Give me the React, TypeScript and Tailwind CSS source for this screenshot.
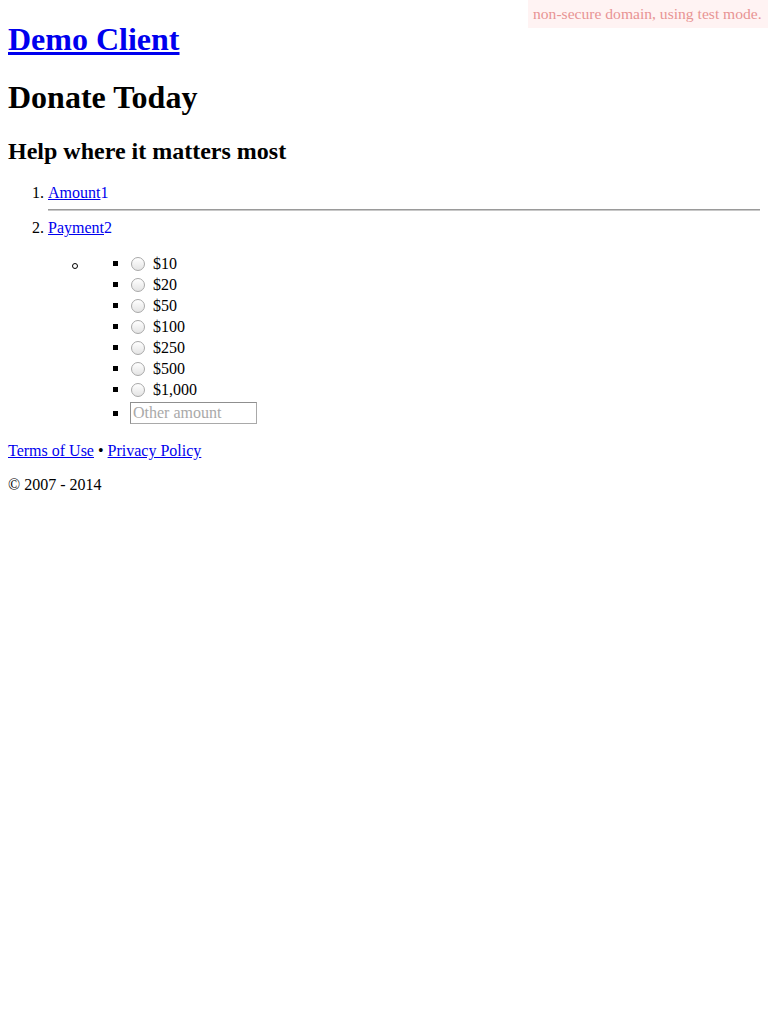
import React from 'react';

const amounts = ['$10', '$20', '$50', '$100', '$250', '$500', '$1,000'];

function Bullet({ gap = 'mr-[13px]' }: { gap?: string }) {
  return <span className={`${gap} inline-block h-[5px] w-[5px] shrink-0 bg-black`} />;
}

export default function App() {
  return (
    <div className="relative min-h-[1024px] bg-white px-2 font-['Liberation_Serif',serif] text-[16px] leading-[18px] text-black">
      <div className="absolute right-0 top-0 w-[240px] bg-[#fff3f3] py-[4px] pl-[5px] text-[15.6px] leading-[20px] text-[#e89494]">
        non-secure domain, using test mode.
      </div>
      <h1 className="pt-[21px] text-[32px] font-bold leading-[37px]">
        <a href="#" className="text-[#0000ee] underline">
          Demo Client
        </a>
      </h1>
      <h1 className="mt-[21px] text-[32px] font-bold leading-[37px]">Donate Today</h1>
      <h2 className="mt-[21px] text-[24px] font-bold leading-[28px]">Help where it matters most</h2>
      <ol className="mt-[19px] list-decimal pl-10">
        <li className="leading-[18px]">
          <a href="#" className="text-[#0000ee] underline">
            Amount<span className="inline-block no-underline">1</span>
          </a>
          <hr className="mt-[7px] border-t border-b border-t-[#9a9a9a] border-b-[#c8c8c8]" />
        </li>
        <li className="mt-[8px] leading-[18px]">
          <a href="#" className="text-[#0000ee] underline">
            Payment<span className="inline-block no-underline">2</span>
          </a>
          <ul className="mt-[16px] pl-[24px]">
            <li className="flex items-start">
              <span className="mt-[10px] inline-block h-[6px] w-[6px] shrink-0 rounded-full border border-black" />
              <ul className="ml-[35px]">
                {amounts.map((a) => (
                  <li key={a} className="flex h-[21px] items-center leading-[21px]">
                    <Bullet />
                    <input
                      type="radio"
                      name="amount"
                      className="mr-[8px] h-[14px] w-[14px] shrink-0 appearance-none rounded-full border border-[#a8a8a8] bg-gradient-to-b from-[#ffffff] to-[#e4e4e4]"
                    />
                    <span>{a}</span>
                  </li>
                ))}
                <li className="mt-[2px] flex h-[22px] items-center">
                  <Bullet gap="mr-[12px]" />
                  <input
                    type="text"
                    placeholder="Other amount"
                    className="h-[22px] w-[127px] border border-[#a9a9a9] border-l-[#8f8f8f] border-t-[#8f8f8f] px-[2px] text-[16px] leading-[20px] outline-none placeholder:text-[#a9a9a9]"
                  />
                </li>
              </ul>
            </li>
          </ul>
        </li>
      </ol>
      <p className="mt-[18px]">
        <a href="#" className="text-[#0000ee] underline">
          Terms of Use
        </a>{' '}
        •{' '}
        <a href="#" className="text-[#0000ee] underline">
          Privacy Policy
        </a>
      </p>
      <p className="mt-[16px]">© 2007 - 2014</p>
    </div>
  );
}
